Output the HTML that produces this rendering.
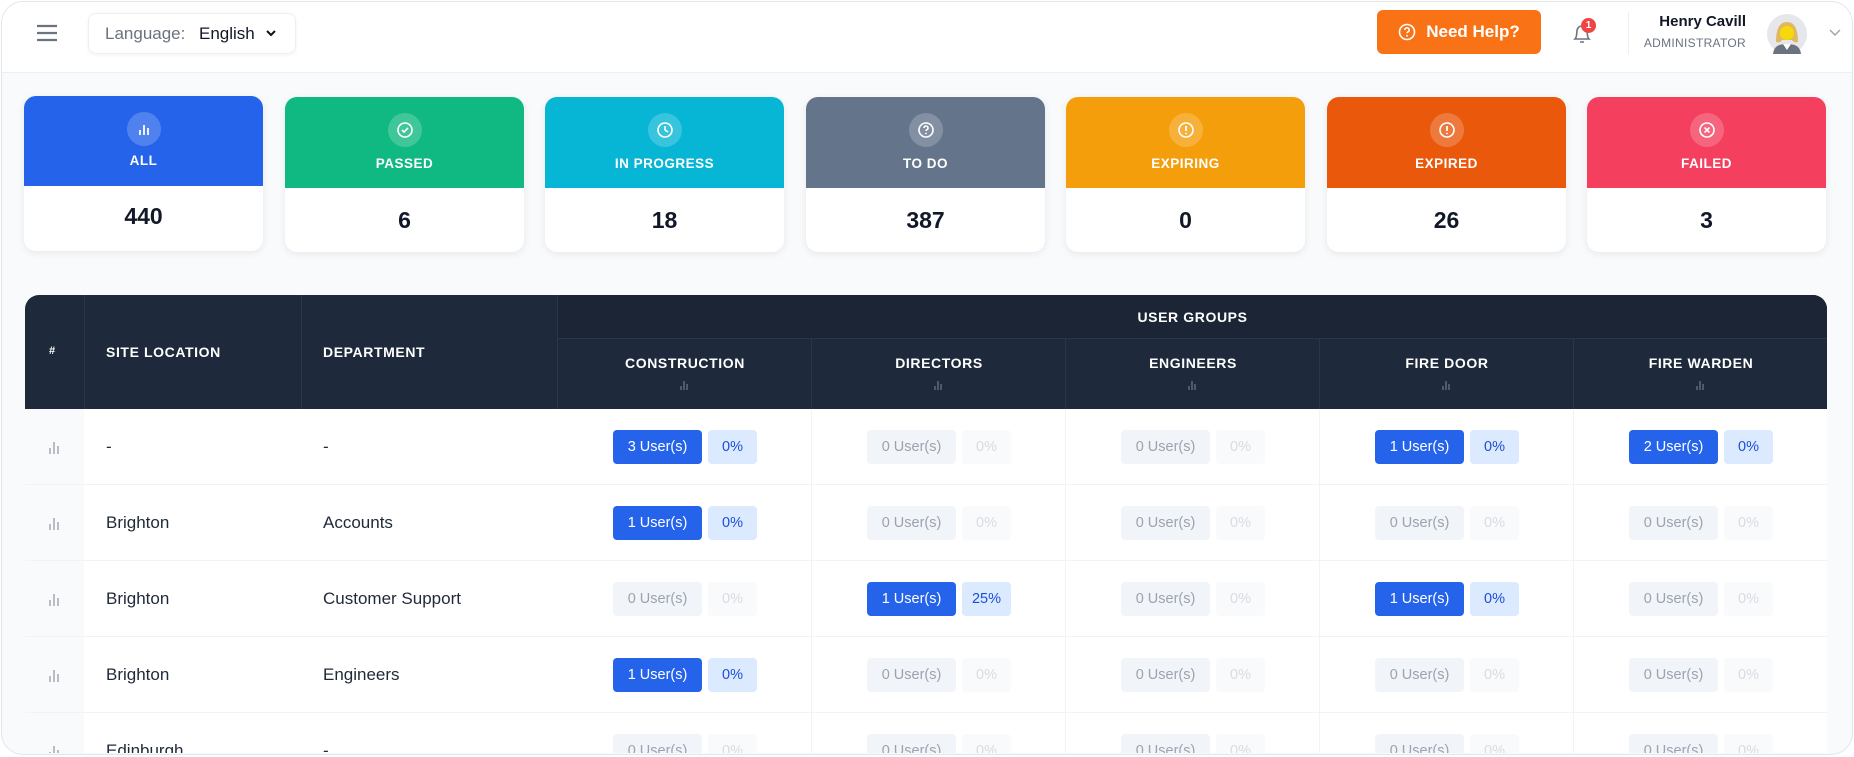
<!DOCTYPE html>
<html><head><meta charset="utf-8">
<style>
*{box-sizing:border-box;margin:0;padding:0}
html,body{width:1854px;height:757px;overflow:hidden}
body{background:#fff;font-family:"Liberation Sans",sans-serif;color:#1f2937;position:relative}
.frame{position:absolute;left:1px;top:1px;width:1852px;height:754px;border:1.5px solid #e2e5ea;border-radius:22px;background:#f8fafc;overflow:hidden}
.top{position:absolute;left:0;top:0;width:100%;height:71px;background:#fff;border-bottom:1.5px solid #eceff3}
.abs{position:absolute}
.card{position:absolute;top:95px;width:239px;height:155px;background:#fff;border-radius:12px;box-shadow:0 2px 8px rgba(15,23,42,.08);overflow:hidden}
.card .hd{height:91px;color:#fff;text-align:center;position:relative}
.card .ic{position:absolute;left:50%;top:16px;width:34px;height:34px;margin-left:-17px;border-radius:50%;background:rgba(255,255,255,.2);display:flex;align-items:center;justify-content:center}
.card .lb{position:absolute;left:0;right:0;top:59px;font-size:13.5px;font-weight:bold;letter-spacing:.5px}
.card .num{text-align:center;font-size:23px;font-weight:bold;color:#111827;line-height:64px}
.tbl{position:absolute;left:23px;top:293px;width:1802px;height:458px;background:#fff;border-radius:14px 14px 0 0;overflow:hidden}
.th{position:absolute;color:#fff;font-weight:bold;font-size:14px;letter-spacing:.6px}
.row{position:absolute;left:0;width:1802px;height:76px;border-bottom:1.5px solid #f1f3f6}
.cell{position:absolute;top:0;height:76px;display:flex;align-items:center;font-size:17px;color:#1f2937}
.grp{position:absolute;top:0;height:76px;width:254px;display:flex;align-items:center;justify-content:center;gap:6px}
.b{height:34px;border-radius:4px;display:flex;align-items:center;justify-content:center;font-size:14.5px}
.u1{width:89px;background:#2563eb;color:#fff}
.p1{width:49px;background:#dbeafe;color:#1d4ed8}
.u0{width:89px;background:#f1f5f9;color:#9ca3af}
.p0{width:49px;background:#f8fafc;color:#d8dce2}
.bars{position:absolute;left:22px;width:14px;height:14px}
</style></head><body>
<div class="frame">
<div class="top">
 <svg class="abs" style="left:34px;top:22px" width="22" height="18" viewBox="0 0 22 18"><path d="M1 2h20M1 9h20M1 16h20" stroke="#6b7280" stroke-width="2.2"/></svg>
 <div class="abs" style="left:86px;top:11px;width:208px;height:41px;border:1.5px solid #eceff3;border-radius:8px;box-shadow:0 1px 4px rgba(0,0,0,.05)">
  <span class="abs" style="left:16px;top:10px;font-size:17px;color:#6b7280">Language:</span>
  <span class="abs" style="left:110px;top:10px;font-size:17px;color:#111827;font-weight:500">English</span>
  <svg class="abs" style="left:176px;top:15px" width="12" height="9" viewBox="0 0 12 9"><path d="M2 2l4 4 4-4" stroke="#111" stroke-width="2" fill="none"/></svg>
 </div>
 <div class="abs" style="left:1375px;top:8px;width:164px;height:44px;background:#f97316;border-radius:6px;color:#fff;font-size:17px;font-weight:bold;display:flex;align-items:center;justify-content:center;gap:10px">
  <svg width="18" height="18" viewBox="0 0 18 18"><circle cx="9" cy="9" r="7.5" stroke="#fff" stroke-width="1.6" fill="none"/><path d="M6.8 7a2.2 2.2 0 1 1 3 2c-.6.3-.8.7-.8 1.3" stroke="#fff" stroke-width="1.6" fill="none"/><circle cx="9" cy="12.8" r=".9" fill="#fff"/></svg>Need Help?</div>
 <svg class="abs" style="left:1569px;top:20px" width="22" height="24" viewBox="0 0 22 24"><path d="M4 17c2-2 1.5-5 2-8a5 5 0 0 1 10 0c.5 3 0 6 2 8z" stroke="#6b7280" stroke-width="1.6" fill="none"/><path d="M9 20h4" stroke="#6b7280" stroke-width="1.6"/></svg>
 <div class="abs" style="left:1579px;top:16px;width:15px;height:15px;border-radius:50%;background:#ef4444;color:#fff;font-size:10px;font-weight:bold;text-align:center;line-height:15px">1</div>
 <div class="abs" style="left:1626px;top:10px;width:1px;height:42px;background:#eceff3"></div>
 <div class="abs" style="right:106px;top:11px;font-size:15px;font-weight:bold;color:#111827;text-align:right">Henry Cavill</div>
 <div class="abs" style="right:106px;top:34px;font-size:12px;color:#6b7280;letter-spacing:.3px">ADMINISTRATOR</div>
 <svg class="abs" style="left:1765px;top:12px" width="40" height="40" viewBox="0 0 40 40"><circle cx="20" cy="20" r="20" fill="#e5e7eb"/><path d="M6 40c1-8 6-10 14-10s13 2 14 10z" fill="#6b7280"/><path d="M16 30l4 6 4-6" fill="#fff"/><path d="M9 28c0-14 4-20 11-20s11 6 11 20c-3 1-5 0-6-2H15c-1 2-3 3-6 2z" fill="#e0b861"/><circle cx="20" cy="19" r="7" fill="#f5d90a"/></svg>
 <svg class="abs" style="left:1827px;top:27px" width="12" height="8" viewBox="0 0 12 8"><path d="M1 1l5 5 5-5" stroke="#9ca3af" stroke-width="1.4" fill="none"/></svg>
</div>

<div class="card" style="left:22px;top:94px"><div class="hd" style="background:#2563eb;height:90px"><div class="ic"><svg width="14" height="14" viewBox="0 0 14 14"><path d="M3 13V8M7 13V3M11 13V6" stroke="#fff" stroke-width="1.8"/></svg></div><div class="lb" style="top:57px">ALL</div></div><div class="num" style="line-height:60px">440</div></div>
<div class="card" style="left:283px"><div class="hd" style="background:#10b981"><div class="ic"><svg width="18" height="18" viewBox="0 0 18 18"><circle cx="9" cy="9" r="7" stroke="#fff" stroke-width="1.6" fill="none"/><path d="M6 9l2 2 4-4" stroke="#fff" stroke-width="1.6" fill="none"/></svg></div><div class="lb">PASSED</div></div><div class="num">6</div></div>
<div class="card" style="left:543px"><div class="hd" style="background:#06b6d4"><div class="ic"><svg width="18" height="18" viewBox="0 0 18 18"><circle cx="9" cy="9" r="7" stroke="#fff" stroke-width="1.6" fill="none"/><path d="M9 5v4l3 2" stroke="#fff" stroke-width="1.6" fill="none"/></svg></div><div class="lb">IN PROGRESS</div></div><div class="num">18</div></div>
<div class="card" style="left:804px"><div class="hd" style="background:#64748b"><div class="ic"><svg width="18" height="18" viewBox="0 0 18 18"><circle cx="9" cy="9" r="7" stroke="#fff" stroke-width="1.6" fill="none"/><path d="M7 7a2 2 0 1 1 2.6 1.9c-.4.2-.6.5-.6 1" stroke="#fff" stroke-width="1.6" fill="none"/><circle cx="9" cy="12.5" r=".9" fill="#fff"/></svg></div><div class="lb">TO DO</div></div><div class="num">387</div></div>
<div class="card" style="left:1064px"><div class="hd" style="background:#f59e0b"><div class="ic"><svg width="18" height="18" viewBox="0 0 18 18"><circle cx="9" cy="9" r="7" stroke="#fff" stroke-width="1.6" fill="none"/><path d="M9 5v5" stroke="#fff" stroke-width="1.8"/><circle cx="9" cy="12.5" r=".9" fill="#fff"/></svg></div><div class="lb">EXPIRING</div></div><div class="num">0</div></div>
<div class="card" style="left:1325px"><div class="hd" style="background:#ea580c"><div class="ic"><svg width="18" height="18" viewBox="0 0 18 18"><circle cx="9" cy="9" r="7" stroke="#fff" stroke-width="1.6" fill="none"/><path d="M9 5v5" stroke="#fff" stroke-width="1.8"/><circle cx="9" cy="12.5" r=".9" fill="#fff"/></svg></div><div class="lb">EXPIRED</div></div><div class="num">26</div></div>
<div class="card" style="left:1585px"><div class="hd" style="background:#f43f5e"><div class="ic"><svg width="18" height="18" viewBox="0 0 18 18"><circle cx="9" cy="9" r="7" stroke="#fff" stroke-width="1.6" fill="none"/><path d="M6.5 6.5l5 5M11.5 6.5l-5 5" stroke="#fff" stroke-width="1.6"/></svg></div><div class="lb">FAILED</div></div><div class="num">3</div></div>

<div class="tbl">
 <div class="abs" style="left:0;top:0;width:1802px;height:114px;background:#1e293b"></div>
 <div class="abs" style="left:533px;top:0;width:1269px;height:43px;background:#1b2536"></div>
 <div class="abs" style="left:533px;top:43px;width:1269px;height:1px;background:#2b3648"></div>
 <div class="abs" style="left:59px;top:0;width:1px;height:114px;background:#2b3648"></div>
 <div class="abs" style="left:276px;top:0;width:1px;height:114px;background:#2b3648"></div>
 <div class="abs" style="left:532px;top:0;width:1px;height:114px;background:#2b3648"></div>
 <div class="abs" style="left:786px;top:43px;width:1px;height:71px;background:#2b3648"></div>
 <div class="abs" style="left:1040px;top:43px;width:1px;height:71px;background:#2b3648"></div>
 <div class="abs" style="left:1294px;top:43px;width:1px;height:71px;background:#2b3648"></div>
 <div class="abs" style="left:1548px;top:43px;width:1px;height:71px;background:#2b3648"></div>
 <div class="th" style="left:24px;top:50px;font-size:11px">#</div>
 <div class="th" style="left:81px;top:49px">SITE LOCATION</div>
 <div class="th" style="left:298px;top:49px">DEPARTMENT</div>
 <div class="th" style="left:533px;top:14px;width:1269px;text-align:center">USER GROUPS</div>
 <div class="th" style="left:533px;top:60px;width:254px;text-align:center">CONSTRUCTION</div>
 <div class="th" style="left:787px;top:60px;width:254px;text-align:center">DIRECTORS</div>
 <div class="th" style="left:1041px;top:60px;width:254px;text-align:center">ENGINEERS</div>
 <div class="th" style="left:1295px;top:60px;width:254px;text-align:center">FIRE DOOR</div>
 <div class="th" style="left:1549px;top:60px;width:254px;text-align:center">FIRE WARDEN</div>
 <svg class="abs" style="left:654px;top:85px" width="10" height="10"><path d="M2 10V6M5 10V1M8 10V4" stroke="#64748b" stroke-width="1.3"/></svg>
 <svg class="abs" style="left:908px;top:85px" width="10" height="10"><path d="M2 10V6M5 10V1M8 10V4" stroke="#64748b" stroke-width="1.3"/></svg>
 <svg class="abs" style="left:1162px;top:85px" width="10" height="10"><path d="M2 10V6M5 10V1M8 10V4" stroke="#64748b" stroke-width="1.3"/></svg>
 <svg class="abs" style="left:1416px;top:85px" width="10" height="10"><path d="M2 10V6M5 10V1M8 10V4" stroke="#64748b" stroke-width="1.3"/></svg>
 <svg class="abs" style="left:1670px;top:85px" width="10" height="10"><path d="M2 10V6M5 10V1M8 10V4" stroke="#64748b" stroke-width="1.3"/></svg>

 <div class="abs" style="left:0;top:114px;width:59px;height:344px;background:#f9fafb"></div>
 <div class="abs" style="left:786px;top:114px;width:1px;height:344px;background:#f1f3f6"></div>
 <div class="abs" style="left:1040px;top:114px;width:1px;height:344px;background:#f1f3f6"></div>
 <div class="abs" style="left:1294px;top:114px;width:1px;height:344px;background:#f1f3f6"></div>
 <div class="abs" style="left:1548px;top:114px;width:1px;height:344px;background:#f1f3f6"></div>

 <div class="row" style="top:114px">
  <svg class="bars" style="top:31px" viewBox="0 0 14 14"><path d="M3 14V8M7 14V2M11 14V6" stroke="#9ca3af" stroke-width="1.4"/></svg>
  <div class="cell" style="left:81px">-</div><div class="cell" style="left:298px">-</div>
  <div class="grp" style="left:533px"><div class="b u1">3 User(s)</div><div class="b p1">0%</div></div>
  <div class="grp" style="left:787px"><div class="b u0">0 User(s)</div><div class="b p0">0%</div></div>
  <div class="grp" style="left:1041px"><div class="b u0">0 User(s)</div><div class="b p0">0%</div></div>
  <div class="grp" style="left:1295px"><div class="b u1">1 User(s)</div><div class="b p1">0%</div></div>
  <div class="grp" style="left:1549px"><div class="b u1">2 User(s)</div><div class="b p1">0%</div></div>
 </div>
 <div class="row" style="top:190px">
  <svg class="bars" style="top:31px" viewBox="0 0 14 14"><path d="M3 14V8M7 14V2M11 14V6" stroke="#9ca3af" stroke-width="1.4"/></svg>
  <div class="cell" style="left:81px">Brighton</div><div class="cell" style="left:298px">Accounts</div>
  <div class="grp" style="left:533px"><div class="b u1">1 User(s)</div><div class="b p1">0%</div></div>
  <div class="grp" style="left:787px"><div class="b u0">0 User(s)</div><div class="b p0">0%</div></div>
  <div class="grp" style="left:1041px"><div class="b u0">0 User(s)</div><div class="b p0">0%</div></div>
  <div class="grp" style="left:1295px"><div class="b u0">0 User(s)</div><div class="b p0">0%</div></div>
  <div class="grp" style="left:1549px"><div class="b u0">0 User(s)</div><div class="b p0">0%</div></div>
 </div>
 <div class="row" style="top:266px">
  <svg class="bars" style="top:31px" viewBox="0 0 14 14"><path d="M3 14V8M7 14V2M11 14V6" stroke="#9ca3af" stroke-width="1.4"/></svg>
  <div class="cell" style="left:81px">Brighton</div><div class="cell" style="left:298px">Customer Support</div>
  <div class="grp" style="left:533px"><div class="b u0">0 User(s)</div><div class="b p0">0%</div></div>
  <div class="grp" style="left:787px"><div class="b u1">1 User(s)</div><div class="b p1">25%</div></div>
  <div class="grp" style="left:1041px"><div class="b u0">0 User(s)</div><div class="b p0">0%</div></div>
  <div class="grp" style="left:1295px"><div class="b u1">1 User(s)</div><div class="b p1">0%</div></div>
  <div class="grp" style="left:1549px"><div class="b u0">0 User(s)</div><div class="b p0">0%</div></div>
 </div>
 <div class="row" style="top:342px">
  <svg class="bars" style="top:31px" viewBox="0 0 14 14"><path d="M3 14V8M7 14V2M11 14V6" stroke="#9ca3af" stroke-width="1.4"/></svg>
  <div class="cell" style="left:81px">Brighton</div><div class="cell" style="left:298px">Engineers</div>
  <div class="grp" style="left:533px"><div class="b u1">1 User(s)</div><div class="b p1">0%</div></div>
  <div class="grp" style="left:787px"><div class="b u0">0 User(s)</div><div class="b p0">0%</div></div>
  <div class="grp" style="left:1041px"><div class="b u0">0 User(s)</div><div class="b p0">0%</div></div>
  <div class="grp" style="left:1295px"><div class="b u0">0 User(s)</div><div class="b p0">0%</div></div>
  <div class="grp" style="left:1549px"><div class="b u0">0 User(s)</div><div class="b p0">0%</div></div>
 </div>
 <div class="row" style="top:418px;height:40px;overflow:hidden;border:none">
  <svg class="bars" style="top:31px" viewBox="0 0 14 14"><path d="M3 14V8M7 14V2M11 14V6" stroke="#9ca3af" stroke-width="1.4"/></svg>
  <div class="cell" style="left:81px">Edinburgh</div><div class="cell" style="left:298px">-</div>
  <div class="grp" style="left:533px"><div class="b u0">0 User(s)</div><div class="b p0">0%</div></div>
  <div class="grp" style="left:787px"><div class="b u0">0 User(s)</div><div class="b p0">0%</div></div>
  <div class="grp" style="left:1041px"><div class="b u0">0 User(s)</div><div class="b p0">0%</div></div>
  <div class="grp" style="left:1295px"><div class="b u0">0 User(s)</div><div class="b p0">0%</div></div>
  <div class="grp" style="left:1549px"><div class="b u0">0 User(s)</div><div class="b p0">0%</div></div>
 </div>
</div>
</div>
</body></html>
